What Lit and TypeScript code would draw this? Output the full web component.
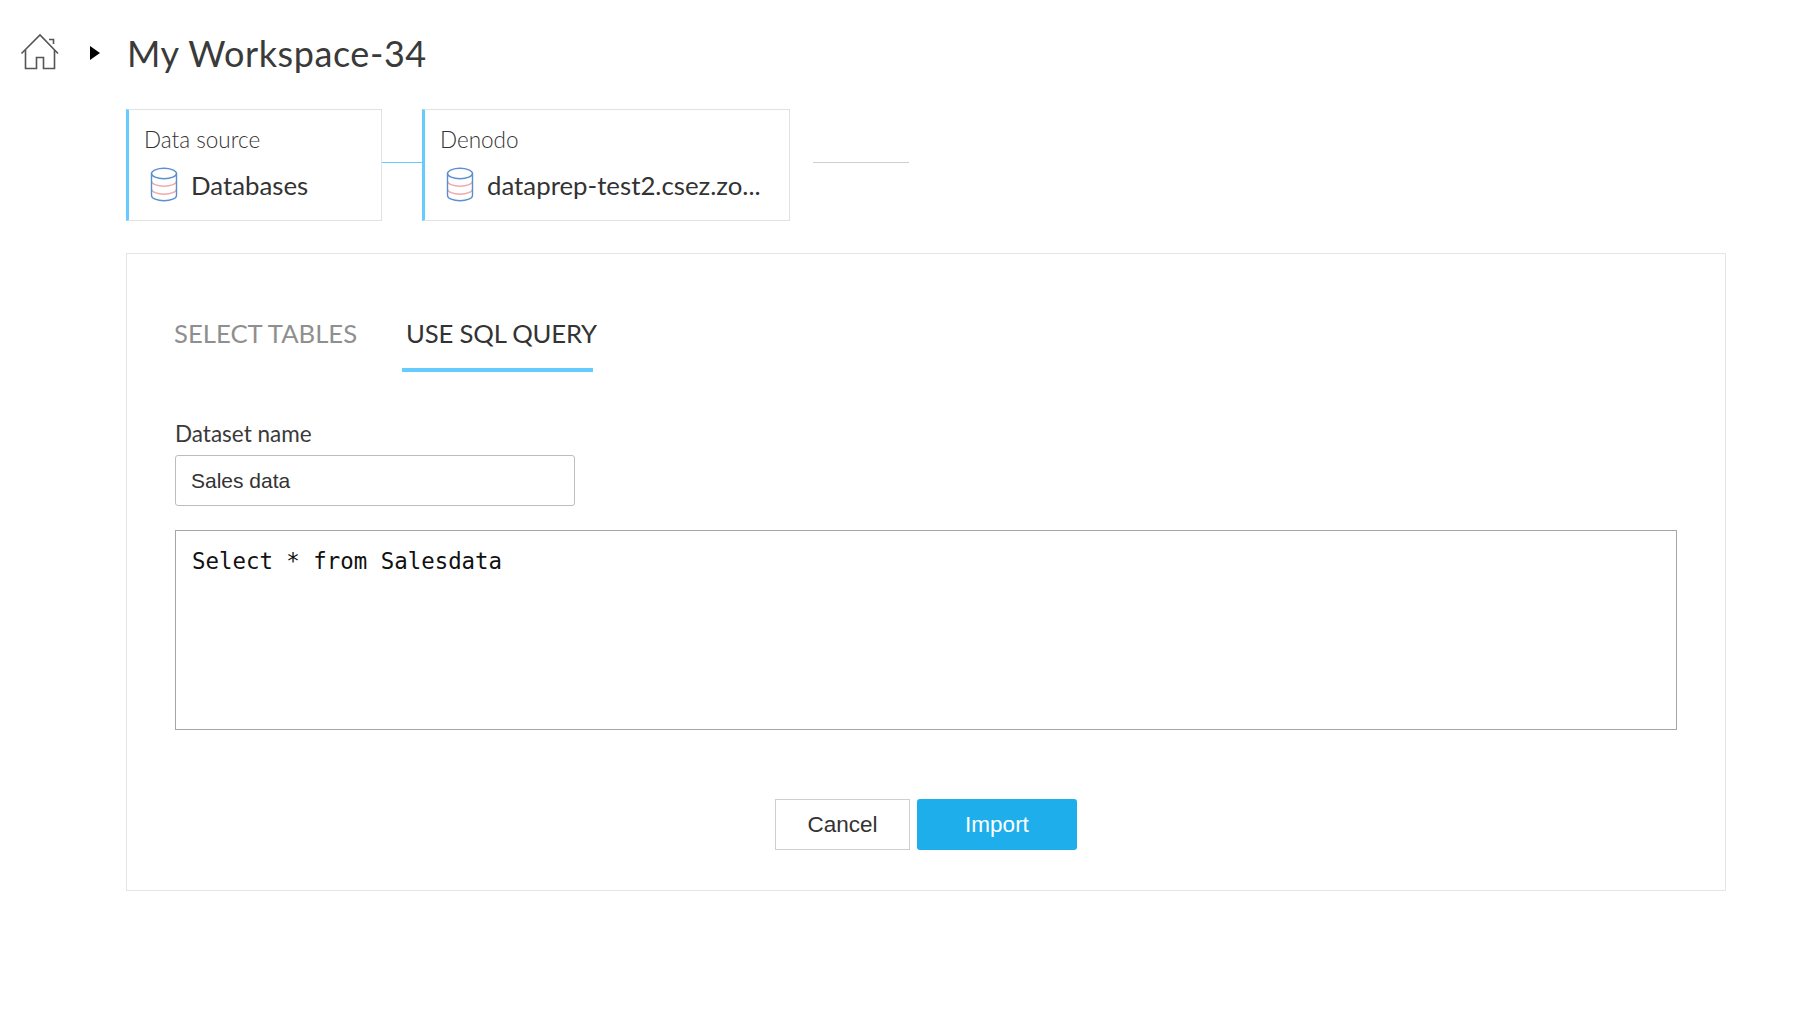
import { LitElement, html, css, svg } from "lit";
import { customElement } from "lit/decorators.js";

const dbIcon = svg`<svg class="db" width="30" height="36" viewBox="0 0 30 36" fill="none">
  <path d="M2.5 14c0 3 5.6 5.2 12.5 5.2s12.5-2.2 12.5-5.2M2.5 22c0 3 5.6 5.2 12.5 5.2s12.5-2.2 12.5-5.2" stroke="#f2a9a9" stroke-width="1.4"/>
  <ellipse cx="15" cy="6.5" rx="12.5" ry="5.2" stroke="#5b8fcf" stroke-width="1.4"/>
  <path d="M2.5 6.5v22c0 3 5.6 5.2 12.5 5.2s12.5-2.2 12.5-5.2v-22" stroke="#5b8fcf" stroke-width="1.4"/>
</svg>`;

@customElement("app-root")
export class AppRoot extends LitElement {
  static styles = css`
    :host {
      display: block;
      width: 1818px;
      height: 1034px;
      background: #fff;
      font-family: Lato, "Open Sans", sans-serif;
      color: #333;
      box-sizing: border-box;
      overflow: hidden;
    }
    .header {
      display: flex;
      align-items: center;
      height: 109px;
      padding: 0 0 3px 20px;
      box-sizing: border-box;
    }
    .home { display: block; margin-top: -2px; }
    .arrow {
      width: 0;
      height: 0;
      margin-left: 30px;
      border-left: 10px solid #000;
      border-top: 7px solid transparent;
      border-bottom: 7px solid transparent;
    }
    .title {
      margin: -1px 0 0 27px;
      font-size: 36px;
      line-height: 44px;
      letter-spacing: 0.58px;
      color: #3a3a3a;
    }
    .main { padding-left: 126px; width: 1600px; }
    .steps { display: flex; align-items: flex-start; height: 112px; }
    .card {
      box-sizing: border-box;
      height: 112px;
      background: #fff;
      border: 1px solid #e2e2e2;
      border-left: 3px solid #66ccff;
      padding: 16px 0 0 15px;
    }
    .card.one { width: 256px; }
    .card.two { width: 368px; }
    .card-label {
      font-size: 22.5px;
      line-height: 28px;
      font-weight: 300;
      color: #333;
    }
    .card-value {
      display: flex;
      align-items: center;
      margin-top: 13px;
      font-size: 25.8px;
      line-height: 36px;
      color: #333;
    }
    .db { display: block; margin: 0 12px 0 5px; flex: none; }
    .conn { height: 1px; margin-top: 53px; flex: none; }
    .conn.blue { width: 40px; background: #66ccff; }
    .conn.grey { width: 96px; margin-left: 23px; background: #cfcfcf; }
    .panel {
      box-sizing: border-box;
      margin-top: 32px;
      height: 638px;
      border: 1px solid #e4e4e4;
      padding: 0 48px;
      display: flex;
      flex-direction: column;
    }
    .tabs {
      display: flex;
      height: 118px;
      align-items: flex-end;
      font-size: 25.7px;
      flex: none;
    }
    .tab {
      height: 68px;
      box-sizing: border-box;
      line-height: 58px;
      white-space: nowrap;
    }
    .tab.off { color: #8f8f8f; margin: 0 45px 0 -1px; }
    .tab.on {
      color: #333;
      border-bottom: 4px solid #66ccff;
      width: 191px;
      padding-left: 4px;
      letter-spacing: -0.2px;
    }
    .label {
      margin: 46px 0 0 0;
      font-size: 22.5px;
      line-height: 32px;
      color: #3a3a3a;
    }
    .input {
      box-sizing: border-box;
      width: 400px;
      height: 51px;
      margin-top: 5px;
      border: 1px solid #bdbdbd;
      border-radius: 3px;
      padding-left: 15px;
      display: flex;
      align-items: center;
      font-family: "Liberation Sans", Arial, sans-serif;
      font-size: 21px;
      color: #333;
    }
    .query {
      box-sizing: border-box;
      width: 1502px;
      height: 200px;
      margin-top: 24px;
      border: 1px solid #a6a6a6;
      padding: 15px 16px;
      font-family: "DejaVu Sans Mono", "Liberation Mono", monospace;
      font-size: 22.4px;
      line-height: 30px;
      color: #111;
    }
    .actions {
      display: flex;
      justify-content: center;
      gap: 7px;
      margin-top: 69px;
      width: 1502px;
    }
    .btn {
      box-sizing: border-box;
      height: 51px;
      display: flex;
      align-items: center;
      justify-content: center;
      font-family: "Liberation Sans", Arial, sans-serif;
      font-size: 22.5px;
    }
    .btn.cancel { width: 135px; border: 1px solid #cfcfcf; color: #333; background: #fff; }
    .btn.import { width: 160px; background: #1eaeec; color: #fff; border-radius: 3px; }
  `;

  render() {
    return html`
      <div class="header">
        <svg class="home" width="40" height="38" viewBox="0 0 40 38" fill="none" stroke="#555" stroke-width="1.6">
          <path d="M1.5 20.5 20 2l18 18.5"/>
          <path d="M5.5 17v18.5h11V24.5h7v11h11V17"/>
          <path d="M29 6.5h4.5V11"/>
        </svg>
        <div class="arrow"></div>
        <div class="title">My Workspace-34</div>
      </div>
      <div class="main">
        <div class="steps">
          <div class="card one">
            <div class="card-label">Data source</div>
            <div class="card-value">${dbIcon}<span>Databases</span></div>
          </div>
          <div class="conn blue"></div>
          <div class="card two">
            <div class="card-label">Denodo</div>
            <div class="card-value">${dbIcon}<span>dataprep-test2.csez.zo...</span></div>
          </div>
          <div class="conn grey"></div>
        </div>
        <div class="panel">
          <div class="tabs">
            <div class="tab off">SELECT TABLES</div>
            <div class="tab on">USE SQL QUERY</div>
          </div>
          <div class="label">Dataset name</div>
          <div class="input">Sales data</div>
          <div class="query">Select * from Salesdata</div>
          <div class="actions">
            <div class="btn cancel">Cancel</div>
            <div class="btn import">Import</div>
          </div>
        </div>
      </div>
    `;
  }
}
